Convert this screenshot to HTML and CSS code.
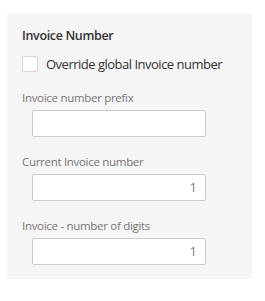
FILE: index.html
```html
<!DOCTYPE html>
<html>
<head>
<meta charset="utf-8">
<link rel="stylesheet" href="styles.css">
</head>
<body>
<div class="panel">
  <h3 class="panel-title">Invoice Number</h3>
  <label class="check-row">
    <span class="checkbox"></span>
    <span class="check-label">Override global Invoice number</span>
  </label>
  <div class="field">
    <div class="field-label">Invoice number prefix</div>
    <div class="input"></div>
  </div>
  <div class="field">
    <div class="field-label">Current Invoice number</div>
    <div class="input num">1</div>
  </div>
  <div class="field">
    <div class="field-label">Invoice - number of digits</div>
    <div class="input num">1</div>
  </div>
</div>
</body>
</html>
```
FILE: styles.css
```css
html, body {
  margin: 0;
  padding: 0;
  background: #fff;
}
body {
  font-family: "Open Sans", sans-serif;
}
.panel {
  box-sizing: border-box;
  margin: 13px 0 0 7px;
  width: 245px;
  height: 266px;
  background: #f5f5f5;
  border-radius: 3px;
  padding: 14px 15px;
}
.panel-title {
  margin: 0;
  font-size: 12.5px;
  letter-spacing: -0.35px;
  line-height: 18px;
  font-weight: 600;
  color: #333;
}
.check-row {
  display: flex;
  align-items: center;
  gap: 8px;
  margin-top: 11px;
  height: 16px;
}
.checkbox {
  box-sizing: border-box;
  flex: none;
  width: 16px;
  height: 16px;
  background: #fff;
  border: 1px solid #d4d4d4;
  border-radius: 2px;
}
.check-label {
  white-space: nowrap;
  font-size: 13px;
  letter-spacing: -0.5px;
  line-height: 16px;
  color: #333;
}
.field {
  margin-top: 17px;
}
.check-row + .field {
  margin-top: 18px;
}
.field-label {
  white-space: nowrap;
  font-size: 11.5px;
  letter-spacing: -0.3px;
  line-height: 16px;
  color: #777;
}
.input {
  box-sizing: border-box;
  margin: 4px 0 0 10px;
  width: 174px;
  height: 27px;
  background: #fff;
  border: 1px solid #ccc;
  border-radius: 2px;
  font-size: 13px;
  line-height: 25px;
  color: #7a8290;
  padding: 0 8px;
}
.input.num {
  text-align: right;
}
```
